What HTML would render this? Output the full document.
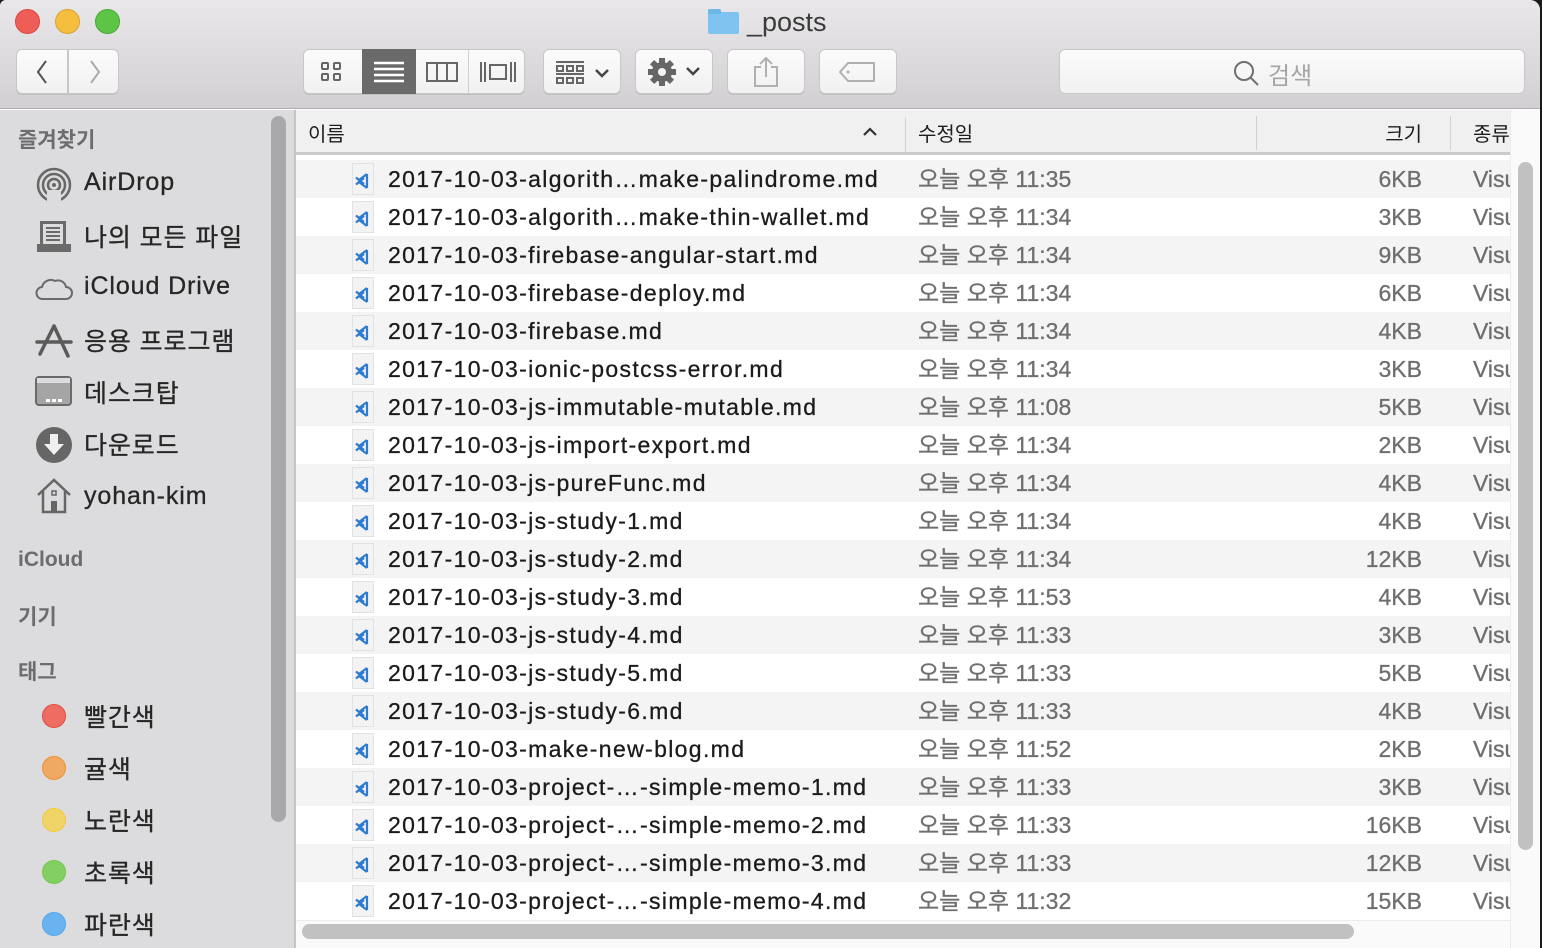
<!DOCTYPE html>
<html><head><meta charset="utf-8">
<style>
*{margin:0;padding:0;box-sizing:border-box}
html,body{width:1542px;height:948px;overflow:hidden;background:#1a1a1a;font-family:"Liberation Sans","Noto Sans CJK KR",sans-serif}
#win{position:absolute;left:0;top:0;width:1540px;height:948px;background:#fff;border-radius:6px 10px 0 0;overflow:hidden}
#tb{position:absolute;left:0;top:0;width:1540px;height:109px;background:linear-gradient(#e9e7e9,#d2d0d2);border-bottom:1px solid #b0aeb0}
.dot{position:absolute;top:9px;width:25px;height:25px;border-radius:50%}
.btn{position:absolute;top:49px;height:45px;background:linear-gradient(#fbfbfb,#f1f1f1);border:1px solid #c8c6c8;border-radius:6px;box-shadow:0 1px 0 #c0bec0}
#side{position:absolute;left:0;top:110px;width:294px;height:838px;background:#dcdbdd}
.sh{position:absolute;left:18px;font-size:21px;color:#6d6b6d;font-weight:bold}
.si{position:absolute;left:84px;font-size:25px;color:#262626;letter-spacing:0.9px;-webkit-text-stroke:0.3px #262626}
.ic{position:absolute;left:35px}
.tag{position:absolute;left:42px;width:24px;height:24px;border-radius:50%}
#list{position:absolute;left:296px;top:110px;width:1214px;height:838px;background:#fff}
#hdr{position:absolute;left:0;top:0;width:1214px;height:45px;background:#f0f0f0;border-bottom:3px solid #cbcbcb;font-size:20px;color:#1e1e1e}
.row{position:absolute;left:0;width:1214px;height:38px;font-size:23px;line-height:38px;white-space:nowrap;overflow:hidden;-webkit-text-stroke:0.3px}
.row.g{background:#f4f4f4}
.nm{position:absolute;left:92px;color:#1b1b1b;letter-spacing:1.35px}
.dt{position:absolute;left:622px;color:#6e6e6e}
.sz{position:absolute;right:88px;color:#6e6e6e}
.kd{position:absolute;left:1177px;color:#6e6e6e}
.fi{position:absolute;left:56px;top:3px;width:22px;height:32px;background:#f3f3f3;border:1px solid #e2e2e2}
</style></head><body>
<div id="win">
<div id="tb">
 <div class="dot" style="left:15px;background:#ee5e56;border:1px solid #d8483f"></div>
 <div class="dot" style="left:55px;background:#f6be3e;border:1px solid #dba22d"></div>
 <div class="dot" style="left:95px;background:#5ec446;border:1px solid #47a834"></div>
 <div style="position:absolute;left:708px;top:12px;width:31px;height:22px;background:#7fc4f0;border-radius:2px"></div>
 <div style="position:absolute;left:708px;top:9px;width:13px;height:5px;background:#6cb6e8;border-radius:2px 2px 0 0"></div>
 <div style="position:absolute;left:747px;top:7px;font-size:27px;color:#3a3a3a">_posts</div>
 <div class="btn" style="left:16px;width:52px;border-radius:6px 0 0 6px"><svg width="50" height="44"><path d="M29 11 L21 22 L29 33" stroke="#555" stroke-width="2" fill="none"/></svg></div>
 <div class="btn" style="left:68px;width:51px;border-radius:0 6px 6px 0"><svg width="50" height="44"><path d="M22 11 L30 22 L22 33" stroke="#aaa" stroke-width="2" fill="none"/></svg></div>
 <div class="btn" style="left:303px;width:222px"></div>
 <svg style="position:absolute;left:320px;top:60px" width="24" height="24"><g fill="none" stroke="#666" stroke-width="2"><rect x="2" y="3" width="6" height="6" rx="1"/><rect x="14" y="3" width="6" height="6" rx="1"/><rect x="2" y="14" width="6" height="6" rx="1"/><rect x="14" y="14" width="6" height="6" rx="1"/></g></svg>
 <div style="position:absolute;left:362px;top:49px;width:54px;height:45px;background:#6a6a6a"></div>
 <svg style="position:absolute;left:372px;top:59px" width="34" height="26"><g stroke="#fff" stroke-width="2.5"><path d="M2 4H32M2 10H32M2 16H32M2 22H32"/></g></svg>
 <div style="position:absolute;left:468px;top:50px;width:1px;height:43px;background:#d0d0d0"></div>
 <svg style="position:absolute;left:425px;top:60px" width="34" height="24"><rect x="2" y="3" width="30" height="18" fill="none" stroke="#666" stroke-width="2"/><path d="M12 3V21M22 3V21" stroke="#666" stroke-width="2"/></svg>
 <svg style="position:absolute;left:478px;top:60px" width="40" height="24"><g stroke="#666" stroke-width="2" fill="none"><path d="M3 2V22M7 2V22M33 2V22M37 2V22"/><rect x="12" y="5" width="16" height="14"/></g></svg>
 <div class="btn" style="left:543px;width:78px"></div>
 <svg style="position:absolute;left:555px;top:60px" width="56" height="28"><g stroke="#666" stroke-width="2" fill="none"><path d="M1 2H29M1 14H29"/><rect x="2" y="6" width="6" height="5"/><rect x="12" y="6" width="6" height="5"/><rect x="22" y="6" width="6" height="5"/><rect x="2" y="18" width="6" height="5"/><rect x="12" y="18" width="6" height="5"/><rect x="22" y="18" width="6" height="5"/><path d="M41 10 L47 16 L53 10" stroke="#444" stroke-width="2.5"/></g></svg>
 <div class="btn" style="left:635px;width:78px"></div>
 <svg style="position:absolute;left:646px;top:57px" width="60" height="30"><g transform="translate(16,15)"><circle r="10" fill="#666"/><g fill="#666"><rect x="-3" y="-14" width="6" height="28"/><rect x="-14" y="-3" width="28" height="6"/><rect x="-3" y="-14" width="6" height="28" transform="rotate(45)"/><rect x="-3" y="-14" width="6" height="28" transform="rotate(-45)"/></g><circle r="4" fill="#f4f4f4"/></g><path d="M41 11 L47 17 L53 11" stroke="#444" stroke-width="2.5" fill="none"/></svg>
 <div class="btn" style="left:727px;width:78px"></div>
 <svg style="position:absolute;left:752px;top:55px" width="28" height="34"><g stroke="#b0b0b0" stroke-width="2" fill="none"><path d="M9 12H3V31H25V12H19"/><path d="M14 22V3M8 9L14 3L20 9"/></g></svg>
 <div class="btn" style="left:819px;width:78px"></div>
 <svg style="position:absolute;left:838px;top:60px" width="40" height="24"><path d="M10 3H36V21H10L2 12Z" fill="none" stroke="#b0b0b0" stroke-width="2" stroke-linejoin="round"/><circle cx="10" cy="12" r="1.5" fill="#b0b0b0"/></svg>
 <div class="btn" style="left:1059px;width:466px;box-shadow:none"></div>
 <svg style="position:absolute;left:1232px;top:59px" width="28" height="28"><circle cx="12" cy="12" r="9" fill="none" stroke="#707070" stroke-width="2"/><path d="M18.5 18.5L26 26" stroke="#707070" stroke-width="2"/></svg>
 <div style="position:absolute;left:1268px;top:56px;font-size:24px;color:#a5a5a5">검색</div>
</div>
<div id="side">
 <div class="sh" style="top:14px">즐겨찾기</div>
 <svg class="ic" style="top:56px" width="38" height="38"><g fill="none" stroke="#676767" stroke-width="2.5"><circle cx="19" cy="19" r="16"/><circle cx="19" cy="19" r="11"/><circle cx="19" cy="19" r="6"/></g><rect x="12" y="24" width="14" height="14" fill="#dcdbdd"/><circle cx="19" cy="19" r="2" fill="#676767"/></svg>
 <div class="si" style="top:58px">AirDrop</div>
 <svg class="ic" style="top:108px" width="38" height="38"><path d="M5 3H31V26H36V34H2V26H5Z" fill="#6a6a6a"/><rect x="8" y="6" width="20" height="20" fill="#dcdbdd"/><path d="M11 10H25M11 14H25M11 18H25M11 22H25" stroke="#6a6a6a" stroke-width="2"/></svg>
 <div class="si" style="top:108px">나의 모든 파일</div>
 <svg class="ic" style="top:163px" width="38" height="30"><path d="M8 26A6 6 0 0 1 7 14A9 9 0 0 1 20 8A8 8 0 0 1 31 14A6 6 0 0 1 31 26Z" fill="none" stroke="#6a6a6a" stroke-width="2"/></svg>
 <div class="si" style="top:162px">iCloud Drive</div>
 <svg class="ic" style="top:212px" width="38" height="38"><g stroke="#5a5a5a" stroke-width="3.5" stroke-linecap="round"><path d="M19 4L5 32M19 4L33 34M2 20H36"/></g></svg>
 <div class="si" style="top:212px">응용 프로그램</div>
 <svg class="ic" style="top:266px" width="38" height="32"><rect x="1" y="1" width="35" height="28" rx="3" fill="#a5a5a5" stroke="#6a6a6a" stroke-width="2"/><rect x="2" y="2" width="33" height="5" fill="#dcdbdd"/><rect x="11" y="23" width="4" height="3" fill="#fff"/><rect x="17" y="23" width="4" height="3" fill="#fff"/><rect x="23" y="23" width="4" height="3" fill="#fff"/></svg>
 <div class="si" style="top:264px">데스크탑</div>
 <svg class="ic" style="top:316px" width="38" height="38"><circle cx="19" cy="19" r="18" fill="#666"/><path d="M15 8H23V18H29L19 29L9 18H15Z" fill="#f0f0f0"/></svg>
 <div class="si" style="top:316px">다운로드</div>
 <svg class="ic" style="top:367px" width="38" height="38"><path d="M3 18L19 3L35 18M8 14V35H30V14" fill="none" stroke="#666" stroke-width="2.5"/><rect x="16" y="24" width="6" height="11" fill="#666"/><rect x="17" y="14" width="4" height="4" fill="none" stroke="#666" stroke-width="1.5"/></svg>
 <div class="si" style="top:372px">yohan-kim</div>
 <div class="sh" style="top:438px">iCloud</div>
 <div class="sh" style="top:491px">기기</div>
 <div class="sh" style="top:546px">태그</div>
 <div class="tag" style="top:594px;background:#ee6d63;border:1px solid #e24c42"></div><div class="si" style="top:588px">빨간색</div>
 <div class="tag" style="top:646px;background:#efa960;border:1px solid #ec9333"></div><div class="si" style="top:640px">귤색</div>
 <div class="tag" style="top:698px;background:#f1d467;border:1px solid #f4c836"></div><div class="si" style="top:692px">노란색</div>
 <div class="tag" style="top:750px;background:#84cf64;border:1px solid #72c84d"></div><div class="si" style="top:744px">초록색</div>
 <div class="tag" style="top:802px;background:#6ab3ee;border:1px solid #4ea6f0"></div><div class="si" style="top:796px">파란색</div>
 <div style="position:absolute;left:271px;top:6px;width:15px;height:706px;border-radius:8px;background:#a8a8aa"></div>
</div>
<div style="position:absolute;left:294px;top:110px;width:2px;height:838px;background:#c4c3c5"></div>
<div id="list">
 <div id="hdr">
  <div style="position:absolute;left:12px;top:8px">이름</div>
  <svg style="position:absolute;left:566px;top:16px" width="16" height="12"><path d="M2 9L8 3L14 9" stroke="#333" stroke-width="2.2" fill="none"/></svg>
  <div style="position:absolute;left:609px;top:8px;width:1px;height:34px;background:#d0d0d0"></div>
  <div style="position:absolute;left:622px;top:8px">수정일</div>
  <div style="position:absolute;left:960px;top:6px;width:1px;height:34px;background:#d0d0d0"></div>
  <div style="position:absolute;right:88px;top:8px">크기</div>
  <div style="position:absolute;left:1154px;top:6px;width:1px;height:34px;background:#d0d0d0"></div>
  <div style="position:absolute;left:1177px;top:8px">종류</div>
 </div>
 <div id="rows"></div>
 <div style="position:absolute;left:0;top:810px;width:1214px;height:28px;background:#fafafa;border-top:1px solid #ececec"></div>
 <div style="position:absolute;left:6px;top:814px;width:1052px;height:15px;border-radius:8px;background:#c1c1c1"></div>
</div>
<div style="position:absolute;left:1510px;top:110px;width:30px;height:838px;background:#fafafa;border-left:1px solid #ececec"></div>
<div style="position:absolute;left:1518px;top:162px;width:15px;height:688px;border-radius:8px;background:#c1c1c1"></div>
</div>
<script>
var d=[["2017-10-03-algorith...make-palindrome.md","11:35","6KB"],["2017-10-03-algorith...make-thin-wallet.md","11:34","3KB"],["2017-10-03-firebase-angular-start.md","11:34","9KB"],["2017-10-03-firebase-deploy.md","11:34","6KB"],["2017-10-03-firebase.md","11:34","4KB"],["2017-10-03-ionic-postcss-error.md","11:34","3KB"],["2017-10-03-js-immutable-mutable.md","11:08","5KB"],["2017-10-03-js-import-export.md","11:34","2KB"],["2017-10-03-js-pureFunc.md","11:34","4KB"],["2017-10-03-js-study-1.md","11:34","4KB"],["2017-10-03-js-study-2.md","11:34","12KB"],["2017-10-03-js-study-3.md","11:53","4KB"],["2017-10-03-js-study-4.md","11:33","3KB"],["2017-10-03-js-study-5.md","11:33","5KB"],["2017-10-03-js-study-6.md","11:33","4KB"],["2017-10-03-make-new-blog.md","11:52","2KB"],["2017-10-03-project-...-simple-memo-1.md","11:33","3KB"],["2017-10-03-project-...-simple-memo-2.md","11:33","16KB"],["2017-10-03-project-...-simple-memo-3.md","11:33","12KB"],["2017-10-03-project-...-simple-memo-4.md","11:32","15KB"]];
var h="";
d.forEach(function(r,i){h+='<div class="row'+(i%2==0?' g':'')+'" style="top:'+(50+38*i)+'px"><div class="fi"><svg width="20" height="30"><path d="M14 10V24 M14 10L6 16 L3 13.5 M14 24L6 18 L3 20.5 M6 16L11 20 M6 18L11 14" stroke="#2f7ccf" stroke-width="2.2" fill="none" stroke-linejoin="round"/></svg></div><span class="nm">'+r[0].replace("...","…")+'</span><span class="dt">오늘 오후 '+r[1]+'</span><span class="sz">'+r[2]+'</span><span class="kd">Visual</span></div>';});
document.getElementById("rows").innerHTML=h;
</script>
</body></html>
